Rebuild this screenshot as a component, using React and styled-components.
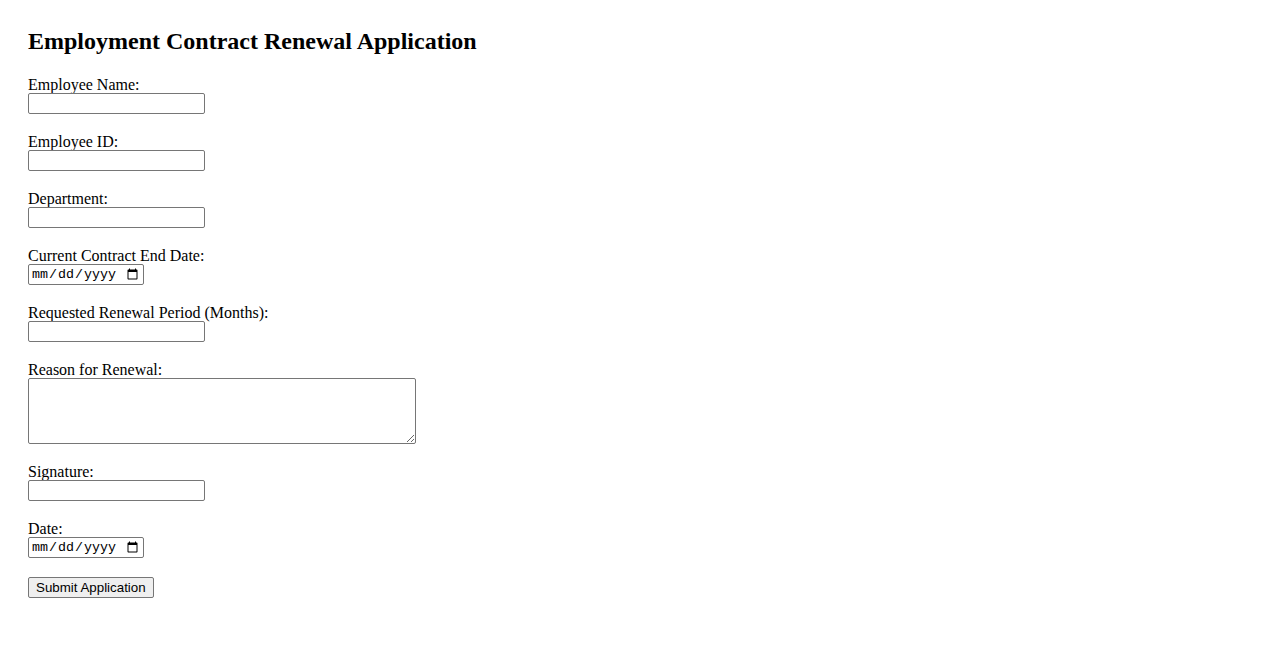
import React from 'react';
import styled, { createGlobalStyle } from 'styled-components';

const GlobalStyle = createGlobalStyle`
  body {
    margin: 8px;
    font-family: "Liberation Serif", "Times New Roman", serif;
    font-size: 16px;
    color: #000;
    background: #fff;
  }
`;

const Page = styled.div`
  padding: 20px;
`;

const Title = styled.h2`
  font-size: 24px;
  font-weight: bold;
  margin: 0 0 20px;
`;

const Form = styled.form`
  display: flex;
  flex-direction: column;
  align-items: flex-start;
  gap: 18px;
`;

const Field = styled.div`
  display: flex;
  flex-direction: column;
  align-items: flex-start;
`;

const Label = styled.label`
  line-height: 16px;
  padding-top: 2px;
`;

const TextInput = styled.input`
  font-family: "Liberation Sans", Arial, sans-serif;
  font-size: 13.333px;
  width: 177px;
  height: 21px;
  box-sizing: border-box;
  border: 1px solid #767676;
  border-radius: 2px;
  padding: 1px 2px;
  margin: 0;
`;

const DateInput = styled(TextInput)`
  width: 116px;
  font-family: "Liberation Mono", monospace;
`;

const TextArea = styled.textarea`
  width: 388px;
  height: 66px;
  box-sizing: border-box;
  border: 1px solid #767676;
  border-radius: 2px;
  margin: 0;
`;

const SubmitButton = styled.button`
  font-family: "Liberation Sans", Arial, sans-serif;
  font-size: 13.333px;
  height: 21px;
  padding: 1px 7px;
  border: 1px solid #767676;
  border-radius: 2px;
  background: #efefef;
  color: #000;
  margin: 1px 0 0;
`;

function App() {
  return (
    <Page>
      <GlobalStyle />
      <Title>Employment Contract Renewal Application</Title>
      <Form onSubmit={(e) => e.preventDefault()}>
        <Field>
          <Label htmlFor="name">Employee Name:</Label>
          <TextInput id="name" type="text" />
        </Field>
        <Field>
          <Label htmlFor="empid">Employee ID:</Label>
          <TextInput id="empid" type="text" />
        </Field>
        <Field>
          <Label htmlFor="dept">Department:</Label>
          <TextInput id="dept" type="text" />
        </Field>
        <Field>
          <Label htmlFor="enddate">Current Contract End Date:</Label>
          <DateInput id="enddate" type="date" />
        </Field>
        <Field>
          <Label htmlFor="period">Requested Renewal Period (Months):</Label>
          <TextInput id="period" type="number" />
        </Field>
        <Field>
          <Label htmlFor="reason">Reason for Renewal:</Label>
          <TextArea id="reason" />
        </Field>
        <Field>
          <Label htmlFor="sig">Signature:</Label>
          <TextInput id="sig" type="text" />
        </Field>
        <Field>
          <Label htmlFor="date">Date:</Label>
          <DateInput id="date" type="date" />
        </Field>
        <SubmitButton type="submit">Submit Application</SubmitButton>
      </Form>
    </Page>
  );
}

export default App;
